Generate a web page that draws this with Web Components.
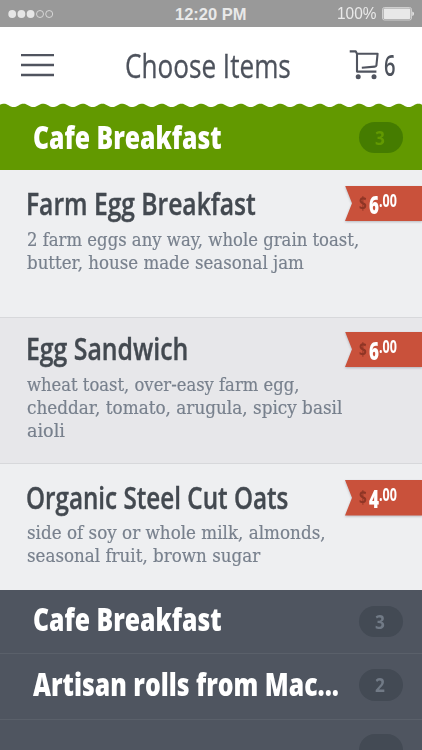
<!DOCTYPE html>
<html lang="en">
<head>
<meta charset="utf-8">
<title>Choose Items</title>
<style>
html,body{margin:0;height:750px;overflow:hidden;background:#eeeff1}
</style>
</head>
<body>
<menu-app></menu-app>
<script>
const CONDENSED = '"Open Sans","Noto Sans",sans-serif';

// One line of text, squeezed horizontally to a given width.
class FitText extends HTMLElement {
  constructor() {
    super();
    this.attachShadow({mode: 'open'}).innerHTML =
      '<style>:host{display:block;white-space:nowrap;flex:none}span{display:inline-block;transform-origin:0 50%}</style><span><slot></slot></span>';
  }
  connectedCallback() {
    const w = +this.getAttribute('w');
    this.style.width = w + 'px';
    const s = this.shadowRoot.querySelector('span');
    if (s.offsetWidth) s.style.transform = `scaleX(${w / s.offsetWidth})`;
  }
}

class StatusBar extends HTMLElement {
  constructor() {
    super();
    this.attachShadow({mode: 'open'}).innerHTML = `<style>
      :host{display:grid;grid-template-columns:1fr auto 1fr;align-items:center;height:26.5px;box-sizing:border-box;padding:1px 8px 0 8px;background:#999;color:#e9e9e9;font:16px/26px "Liberation Sans",Arial,sans-serif}
      svg{display:block}.r{display:flex;justify-content:flex-end;align-items:center;gap:6px}
      .t{font-weight:700;font-size:16.5px}
    </style>
    <svg width="46" height="10" viewBox="0 0 46 10"><g fill="#e6e6e6"><circle cx="4.2" cy="5" r="3.9"/><circle cx="13.4" cy="5" r="3.9"/><circle cx="22.6" cy="5" r="3.9"/></g><g fill="none" stroke="#ddd" stroke-width=".9"><circle cx="32" cy="5" r="3.5"/><circle cx="41.2" cy="5" r="3.5"/></g></svg>
    <fit-text class="t" w="72">12:20 PM</fit-text>
    <div class="r"><fit-text w="39.5">100%</fit-text>
    <svg width="32" height="14" viewBox="0 0 32 14"><rect x=".5" y=".5" width="29" height="12.5" rx="2" fill="none" stroke="#ddd" stroke-width=".8"/><rect x="1.6" y="1.6" width="26.8" height="10.3" rx="1" fill="#e8e8e8"/><path d="M30.3 4.5q1.7 .6 1.7 2.3t-1.7 2.3z" fill="#e8e8e8"/></svg></div>`;
  }
}

class NavBar extends HTMLElement {
  constructor() {
    super();
    this.attachShadow({mode: 'open'}).innerHTML = `<style>
      :host{display:flex;align-items:center;height:76.5px;box-sizing:border-box;padding:0 27px 0 20.5px;background:#fff;color:#4d525c;font-family:${CONDENSED};line-height:48px}
      svg{display:block;flex:none}.title{font-size:33px;margin:3px auto 0 71.5px;-webkit-text-stroke:.3px}
      .n{font-size:28px;font-weight:600;margin:1px 0 0 3.5px}
    </style>
    <svg width="33" height="24" viewBox="0 0 33 24"><path d="M0 2.1h33M0 12h33M0 22h33" stroke="#50545f" stroke-width="2.4"/></svg>
    <fit-text class="title" w="165.5">Choose Items</fit-text>
    <svg width="31" height="31" viewBox="0 0 31 31"><path d="M.7 2.4h6.1l1.2 2.3v17.9H27.4M8 4.7h20.6l-1.2 11.8q-.3 1-1.6 1.1l-13 1.1" fill="none" stroke="#50545f" stroke-width="2.1" stroke-linejoin="round"/><circle cx="9.2" cy="27.7" r="2.5" fill="#50545f"/><circle cx="25" cy="27.7" r="2.5" fill="#50545f"/></svg>
    <fit-text class="n" w="11.5">6</fit-text>`;
  }
}

// Scalloped strip that forms the upper edge of the open section.
class ScallopEdge extends HTMLElement {
  constructor() {
    super();
    let d = 'M0 5';
    for (let x = 0; x <= 422; x += 1) d += `L${x} ${(2.4 - 1.75 * Math.cos((x - 3.7) / 19.75 * 2 * Math.PI)).toFixed(2)}`;
    this.attachShadow({mode: 'open'}).innerHTML = `<style>:host{display:block;height:4px;background:#fff}svg{display:block}</style>
      <svg width="422" height="4" viewBox="0 0 422 4"><path d="${d}L422 5Z" fill="#629900"/></svg>`;
  }
}

class MenuSection extends HTMLElement {
  constructor() {
    super();
    this.attachShadow({mode: 'open'}).innerHTML = `<style>
      :host{display:flex;justify-content:space-between;align-items:flex-start;box-sizing:border-box;padding:0 19.5px 0 33px;background:#4f5560;color:#fff;border-bottom:1px solid #5a606a;height:66px;font-family:${CONDENSED}}
      :host([open]){background:#629900;border:0;--pill:#457c00;--num:#629900}
      fit-text{font-size:31px;line-height:44px;font-weight:800;margin-top:var(--ty,8px)}
      .p{width:43.5px;height:31.5px;border-radius:16px;background:var(--pill,#434a54);color:var(--num,#717a86);display:flex;justify-content:center;margin-top:var(--py,16px)}
      .p fit-text{font-size:20px;line-height:32px;font-weight:700;margin:0 2px 0 0}
    </style>
    <fit-text w="${this.getAttribute('w')}"><slot></slot></fit-text><div class="p"><fit-text w="9.5">${this.getAttribute('count')}</fit-text></div>`;
  }
}

class PriceTag extends HTMLElement {
  constructor() {
    super();
    this.attachShadow({mode: 'open'}).innerHTML = `<style>
      :host{display:block;width:77px;height:35.5px;filter:drop-shadow(0 1px 1px rgba(60,60,80,.3))}
      .b{height:100%;box-sizing:border-box;padding-left:13.5px;display:flex;background:#c9513b;color:#fff;clip-path:polygon(0 0,100% 0,100% 100%,0 100%,7px 50%);font-family:${CONDENSED};font-weight:700}
      .d{font-size:17px;line-height:36px;color:#8f3525;margin-right:2.5px}
      .m{font-size:25.5px;line-height:36px;font-weight:800}
      .c{font-size:18px;line-height:29px}
    </style><div class="b"><fit-text class="d" w="8">$</fit-text><fit-text class="m" w="10">${this.getAttribute('amount')}</fit-text><fit-text class="c" w="18">.00</fit-text></div>`;
  }
}

class MenuItem extends HTMLElement {
  constructor() {
    super();
    this.attachShadow({mode: 'open'}).innerHTML = `<style>
      :host{display:block;box-sizing:border-box;padding-left:26.5px;border-bottom:1px solid #d7d8db;background:#eeeff1}
      :host([alt]){background:#e7e7ea}
      .top{display:flex;justify-content:space-between;align-items:flex-start;height:calc(58px + var(--gap,0px))}
      .top>fit-text{font-family:${CONDENSED};font-size:31px;line-height:44px;font-weight:600;color:#434950;-webkit-text-stroke:.4px;margin:var(--ty,11px) 0 0 -.5px}
      price-tag{margin-top:var(--py,16px)}
      ::slotted(fit-text){font:18.5px/23px "DejaVu Serif",serif;color:#78808d;-webkit-text-stroke:.2px}
    </style><div class="top"><fit-text w="${this.getAttribute('w')}">${this.getAttribute('name')}</fit-text><price-tag amount="${this.getAttribute('price')}"></price-tag></div><slot></slot>`;
  }
}

class MenuApp extends HTMLElement {
  constructor() {
    super();
    this.attachShadow({mode: 'open'}).innerHTML = `<style>
      :host{display:flex;flex-direction:column;width:422px;height:750px;overflow:hidden}
      :host>*{flex:none}
    </style>
    <status-bar></status-bar><nav-bar></nav-bar><scallop-edge></scallop-edge>
    <menu-section open w="188.5" count="3" style="height:62.5px;--ty:8px;--py:14.7px">Cafe Breakfast</menu-section>
    <menu-item name="Farm Egg Breakfast" w="229.5" price="6" style="height:148px;--gap:.5px">
      <fit-text w="332">2 farm eggs any way, whole grain toast,</fit-text><fit-text w="277">butter, house made seasonal jam</fit-text></menu-item>
    <menu-item alt name="Egg Sandwich" w="162.5" price="6" style="height:146px;--ty:8.5px;--py:14px;--gap:-2.5px">
      <fit-text w="272">wheat toast, over-easy farm egg,</fit-text><fit-text w="315">cheddar, tomato, arugula, spicy basil</fit-text><fit-text w="38">aioli</fit-text></menu-item>
    <menu-item name="Organic Steel Cut Oats" w="262.5" price="4" style="height:126px;border:0;--ty:11.5px;--py:16.5px;--gap:-.5px">
      <fit-text w="299">side of soy or whole milk, almonds,</fit-text><fit-text w="233">seasonal fruit, brown sugar</fit-text></menu-item>
    <menu-section w="188.5" count="3" style="height:64px;--ty:7.5px;--py:16px">Cafe Breakfast</menu-section>
    <menu-section w="306" count="2" style="--ty:8px;--py:15.5px">Artisan rolls from Mac...</menu-section>
    <menu-section w="1" count="" style="--py:14.5px"></menu-section>`;
  }
}

customElements.define('fit-text', FitText);
customElements.define('status-bar', StatusBar);
customElements.define('nav-bar', NavBar);
customElements.define('scallop-edge', ScallopEdge);
customElements.define('menu-section', MenuSection);
customElements.define('price-tag', PriceTag);
customElements.define('menu-item', MenuItem);
customElements.define('menu-app', MenuApp);
</script>
</body>
</html>
